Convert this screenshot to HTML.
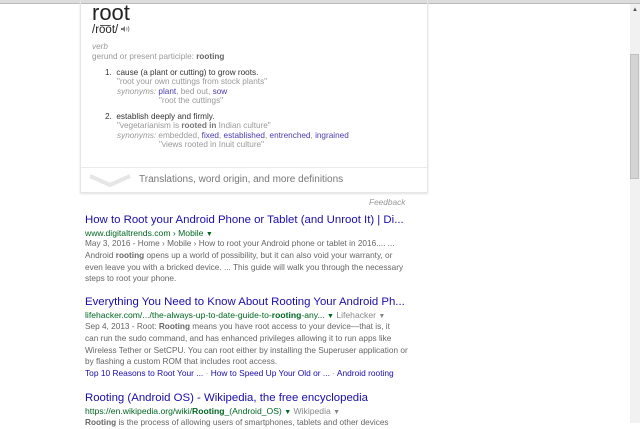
<!DOCTYPE html>
<html><head><meta charset="utf-8"><style>
*{margin:0;padding:0;box-sizing:border-box}
body{width:640px;height:423px;overflow:hidden;background:#fff;font-family:"Liberation Sans",Arial,sans-serif;position:relative}
.a{position:absolute;white-space:nowrap}
.top{left:0;top:0;width:640px;height:4px;background:#dcdcdc;border-bottom:1px solid #bbb}
.card{left:80px;top:0;width:348px;height:193px;border:1px solid #e6e6e6;border-top:none;box-shadow:0 1px 2px #e0e0e0}
.g{color:#999}.d{color:#333}.b{color:#4a3cb0}.l{color:#1a0dab}
.s{font-size:8.2px}
.t{font-size:11.4px;color:#1a0dab}
.u{font-size:8.6px;color:#006621}
.p{font-size:8.25px;color:#666;line-height:11.8px}
.sb{left:630px;top:4px;width:10px;height:419px;background:#f1f1f1}
.th{left:630px;top:54px;width:9px;height:125px;background:#d4d4d4;border:1px solid #c0c0c0}
</style></head><body>
<div class="a top"></div>
<div class="a card"></div>
<div class="a d" style="left:92px;top:0px;font-size:22px;color:#222">root</div>
<div class="a" style="left:92px;top:24px;font-size:11.5px;color:#222">/ro͞ot/ <svg width="9" height="8" viewBox="0 0 9 8"><path d="M0 3h2l2-2v6L2 5H0z" fill="#777"/><path d="M5.5 2.5q1 1.5 0 3M7 1.2q2 2.8 0 5.6" stroke="#777" fill="none" stroke-width=".8"/></svg></div>
<div class="a g s" style="left:92px;top:42px;font-style:italic">verb</div>
<div class="a g s" style="left:92px;top:52px">gerund or present participle: <b style="color:#666">rooting</b></div>
<div class="a d s" style="left:105px;top:68px">1.&nbsp; cause (a plant or cutting) to grow roots.</div>
<div class="a g s" style="left:117px;top:77px">"root your own cuttings from stock plants"</div>
<div class="a g s" style="left:117px;top:87px"><i>synonyms:</i> <span class="b">plant</span>, bed out, <span class="b">sow</span></div>
<div class="a g s" style="left:159px;top:96px">"root the cuttings"</div>
<div class="a d s" style="left:105px;top:112px">2.&nbsp; establish deeply and firmly.</div>
<div class="a g s" style="left:117px;top:121px">"vegetarianism is <b style="color:#777">rooted in</b> Indian culture"</div>
<div class="a g s" style="left:117px;top:131px"><i>synonyms:</i> embedded, <span class="b">fixed</span>, <span class="b">established</span>, <span class="b">entrenched</span>, <span class="b">ingrained</span></div>
<div class="a g s" style="left:159px;top:140px">"views rooted in Inuit culture"</div>
<div class="a" style="left:81px;top:167px;width:346px;height:1px;background:#ebebeb"></div>
<svg class="a" style="left:89px;top:174px" width="42" height="14"><path d="M1 2L21 11L41 2" stroke="#e6e6e6" stroke-width="4" fill="none"/></svg>
<div class="a" style="left:139px;top:174px;font-size:10px;color:#777">Translations, word origin, and more definitions</div>
<div class="a g" style="left:369px;top:197px;font-size:8.3px;font-style:italic">Feedback</div>

<div class="a t" style="left:85px;top:214px">How to Root your Android Phone or Tablet (and Unroot It) | Di...</div>
<div class="a u" style="left:85px;top:228px">www.digitaltrends.com › Mobile <span style="font-size:7px">▼</span></div>
<div class="a p" style="left:85px;top:238px">May 3, 2016 - Home › Mobile › How to root your Android phone or tablet in 2016.... ...<br>Android <b>rooting</b> opens up a world of possibility, but it can also void your warranty, or<br>even leave you with a bricked device. ... This guide will walk you through the necessary<br>steps to root your phone.</div>

<div class="a t" style="left:85px;top:296px">Everything You Need to Know About Rooting Your Android Ph...</div>
<div class="a u" style="left:85px;top:310px">lifehacker.com/.../the-always-up-to-date-guide-to-<b>rooting</b>-any... <span style="font-size:7px">▼</span> <span style="color:#888">Lifehacker <span style="font-size:7px">▼</span></span></div>
<div class="a p" style="left:85px;top:321px">Sep 4, 2013 - Root: <b>Rooting</b> means you have root access to your device—that is, it<br>can run the sudo command, and has enhanced privileges allowing it to run apps like<br>Wireless Tether or SetCPU. You can root either by installing the Superuser application or<br>by flashing a custom ROM that includes root access.</div>
<div class="a" style="left:85px;top:368px;font-size:8.4px;color:#1a0dab">Top 10 Reasons to Root Your ... <span style="color:#999">·</span> How to Speed Up Your Old or ... <span style="color:#999">·</span> Android rooting</div>

<div class="a t" style="left:85px;top:392px">Rooting (Android OS) - Wikipedia, the free encyclopedia</div>
<div class="a u" style="left:85px;top:406px">https://en.wikipedia.org/wiki/<b>Rooting</b>_(Android_OS) <span style="font-size:7px">▼</span> <span style="color:#888">Wikipedia <span style="font-size:7px">▼</span></span></div>
<div class="a p" style="left:85px;top:417px"><b>Rooting</b> is the process of allowing users of smartphones, tablets and other devices</div>

<div class="a sb"></div>
<div class="a th"></div>
<div class="a" style="left:632px;top:7px;font-size:6px;color:#555">▲</div>
</body></html>
